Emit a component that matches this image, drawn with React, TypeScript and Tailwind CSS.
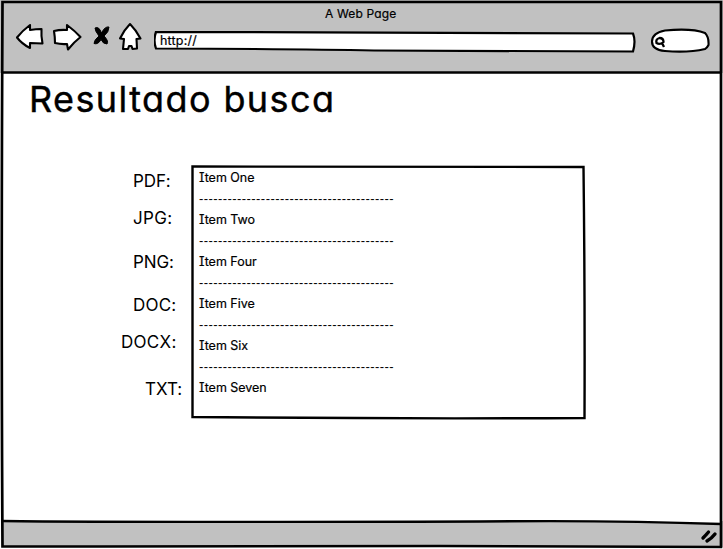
import React from "react";

const labels = [
  { text: "PDF:", box: "pl-[133px] pt-[95px] h-[118px] tracking-[-0.1px]" },
  { text: "JPG:", box: "pl-[133px] pt-[14px] h-[37px] tracking-[0.3px]" },
  { text: "PNG:", box: "pl-[133px] pt-[21px] h-[44px] tracking-[-0.1px]" },
  { text: "DOC:", box: "pl-[133px] pt-[20px] h-[43px] tracking-[0.2px]" },
  { text: "DOCX:", box: "pl-[121px] pt-[14px] h-[37px] tracking-[0.3px]" },
  { text: "TXT:", box: "pl-[145px] pt-[24px] h-[47px] tracking-[0px]" },
];

const items = ["Item One", "Item Two", "Item Four", "Item Five", "Item Six", "Item Seven"];

function NavIcons() {
  return (
    <svg className="h-[71px] w-[150px] shrink-0" viewBox="0 0 150 71" fill="white" stroke="black" strokeWidth="2.1" strokeLinejoin="round">
      <path d="M17 37.5 Q22 31 30 25 L30 30 Q36 29 41.5 29 Q41 36 42.5 43.5 Q36 43 30 43 L30 48 Q22 44 17 37.5Z" />
      <path d="M54 31 Q60 29.5 67 30 L67 25 Q75 31 80.500 37 Q74 42 68 49.500 L67 44 Q61 44.500 55 43 Q55 37 54 31Z" />
      <path d="M130 24 Q136 30 140.500 38.500 L136.500 39 L137 48.500 L132.500 49 L131.500 46 L129 46 L128 49 L123 49 L124 39 L120 38.500 Q124 30 130 24Z" />
      <path d="M95 28 Q99 26 101.500 33 Q105 26 109 27 Q109 32 104 36 Q109 41 107 44 Q103 44 101 39.500 Q98 45 94 43.500 Q94 40 99 36 Q95 31 95 28Z" fill="black" strokeWidth="1" />
    </svg>
  );
}

export default function App() {
  return (
    <div className="relative flex h-[549px] w-[723px] flex-col overflow-hidden bg-white font-['Inter',sans-serif] text-black [font-feature-settings:'cv11','cv08','calt'_0]">
      <header className="relative flex h-[73px] shrink-0 bg-[#c1c1c1]">
        <NavIcons />
        <div className="flex w-[490px] flex-col pl-[4px]">
          <h2 className="h-[31px] pl-[171px] pt-[6px] text-[12px] leading-[15px] tracking-[0.15px] [-webkit-text-stroke:0.2px_black]">A Web Page</h2>
          <div className="relative h-[22px] w-[483px]">
            <svg className="absolute inset-0 h-full w-full" viewBox="0 0 483 22" fill="white" stroke="black" strokeWidth="2.2">
              <path d="M2 1 Q-1 9 2 17.500 Q150 18 220 19.500 L479 20.5 Q482 10 479 2.5 Q300 1 2 0.8Z" />
            </svg>
            <span className="relative block pl-[6px] pt-[2px] text-[12.5px] leading-[15px] tracking-[0.2px] [-webkit-text-stroke:0.2px_black]">http://</span>
          </div>
        </div>
        <svg className="mt-[27px] h-[28px] w-[72px]" viewBox="0 0 72 28" fill="white" stroke="black" strokeWidth="2.1">
          <path d="M25 3.500 Q52 1 65 6 Q69 10 68.500 18 Q67 21 65 22 Q48 26 25 24 Q12 23 12 14.500 Q12 6 25 3.500Z" />
          <path d="M19.500 11 Q23.500 11 23.500 15 Q20 18 16.500 16 Q15.500 12 19.500 11Z M22 16 L24 20" strokeWidth="2.3" />
        </svg>
      </header>

      <main className="flex h-[448px] flex-col">
        <h1 className="h-0 pl-[29px] pt-[3px] text-[36px] leading-[46px] tracking-[1.4px] whitespace-nowrap [-webkit-text-stroke:0.4px_black]">Resultado busca</h1>
        <div className="flex">
          <div className="flex w-[191px] shrink-0 flex-col">
            {labels.map((label) => (
              <div key={label.text} className={label.box + " shrink-0 text-[17px] leading-[20px] whitespace-nowrap"}>{label.text}</div>
            ))}
          </div>
          <section className="relative mt-[87px] h-[257px] w-[397px]">
            <svg className="absolute inset-0 h-full w-full" viewBox="0 0 397 257" fill="none" stroke="black" strokeWidth="2.4">
              <path d="M1.5 3.5 Q200 4.5 392.500 4 Q394 130 393.500 255 Q200 256 1.5 254 Q1 120 1.5 3.500Z" />
            </svg>
            <div className="relative pl-[8px] pt-[7px]">
              {items.map((item, i) => (
                <div key={item} className="h-[42px]">
                  <div className="h-[21px] text-[12.5px] leading-[16px] tracking-[-0.02px] [-webkit-text-stroke:0.2px_black]">{item}</div>
                  {i < items.length - 1 && (
                    <div className="font-['Liberation_Sans',sans-serif] text-[13px] leading-[16px] tracking-[0.43px] whitespace-nowrap">-----------------------------------------</div>
                  )}
                </div>
              ))}
            </div>
          </section>
        </div>
      </main>

      <footer className="flex h-[28px] shrink-0 justify-end">
        <svg className="h-[28px] w-[723px]" viewBox="0 521 723 28">
          <path d="M2 521 L723 521 L723 547 L2 547Z" fill="#c1c1c1" />
          <path d="M500 520 L721 520 L721 524 Q620 520 500 521Z" fill="white" />
          <path d="M703 538 Q706 535 708.500 532 M707 541 Q712 538 715 534" stroke="black" strokeWidth="3.4" strokeLinecap="round" fill="none" />
        </svg>
      </footer>

      <svg className="pointer-events-none absolute inset-0 h-full w-full" viewBox="0 0 723 549" fill="none" stroke="black" strokeWidth="2.7">
        <path d="M2.500 2 L721 2 Q720.500 250 721 547 L440 546 L100 546.500 L2.500 546.500 Q1 300 2.500 2Z" />
        <path d="M2 72.5 Q300 73.5 721 72.5" strokeWidth="2.3" />
        <path d="M2 521 Q120 522.5 480 521.5 Q610 520 721 524" strokeWidth="2.3" />
      </svg>
    </div>
  );
}
